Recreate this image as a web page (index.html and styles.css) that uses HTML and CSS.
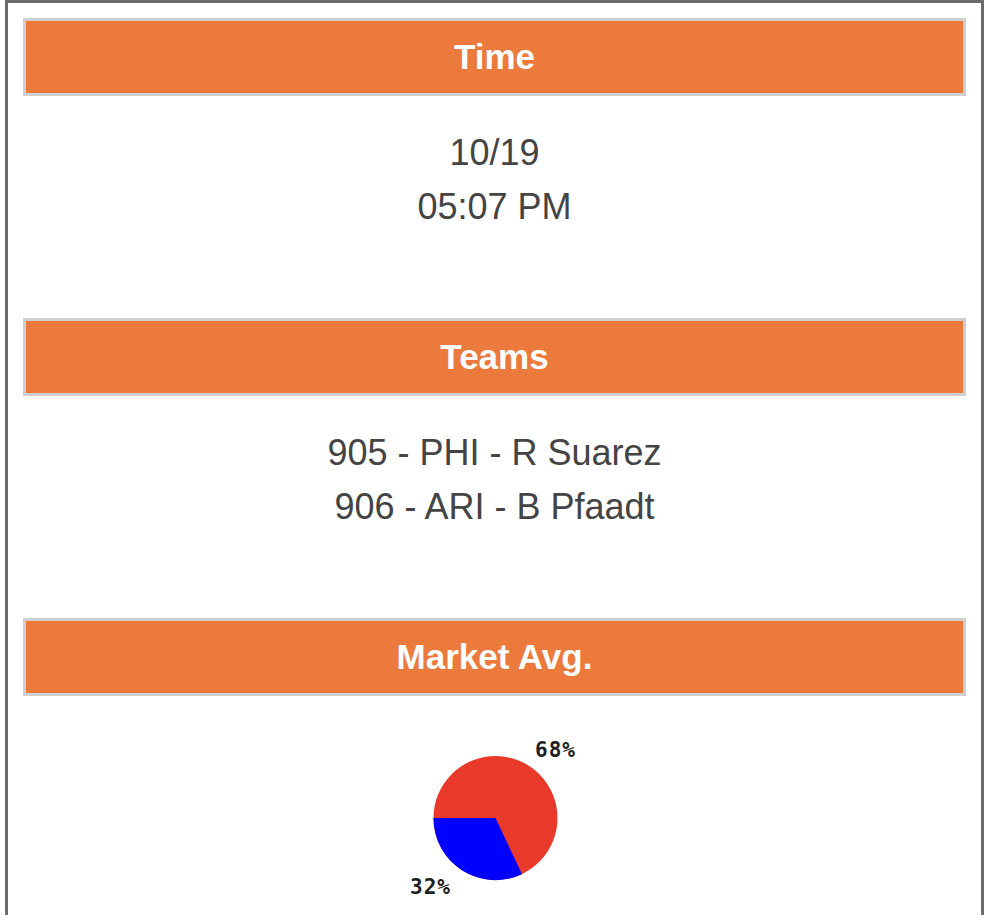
FILE: index.html
```html
<!DOCTYPE html>
<html>
<head>
<meta charset="utf-8">
<link rel="stylesheet" href="styles.css">
</head>
<body>
<div class="panel">
  <section class="block">
    <h2 class="block-head">Time</h2>
    <div class="block-body">
      <div class="line">10/19</div>
      <div class="line">05:07 PM</div>
    </div>
  </section>
  <section class="block">
    <h2 class="block-head">Teams</h2>
    <div class="block-body">
      <div class="line">905 - PHI - R Suarez</div>
      <div class="line">906 - ARI - B Pfaadt</div>
    </div>
  </section>
  <section class="block">
    <h2 class="block-head">Market Avg.</h2>
    <div class="chart-wrap">
      <svg class="pie" width="200" height="189" viewBox="0 0 200 189">
        <circle cx="100.5" cy="92" r="62" fill="#e9392a"/>
        <path d="M100.5,92 L38.5,92 A62,62 0 0,0 127,148.2 Z" fill="#0000ff"/>
        <text class="pie-label" x="140" y="31">68%</text>
        <text class="pie-label" x="15" y="168">32%</text>
      </svg>
    </div>
  </section>
</div>
</body>
</html>
```

FILE: styles.css
```css
html, body {
  margin: 0;
  padding: 0;
  background: #ffffff;
}

body {
  font-family: "Liberation Sans", Arial, Helvetica, sans-serif;
}

.panel {
  margin-left: 5px;
  width: 979px;
  border: 3px solid #6b6b6b;
  border-bottom: none;
  padding: 15px 15px 0 15px;
  min-height: 915px;
  box-sizing: border-box;
}

.block-head {
  margin: 0;
  height: 72px;
  line-height: 72px;
  background: #ec7a3c;
  border: 3px solid #cfcfcf;
  color: #ffffff;
  font-size: 35px;
  font-weight: bold;
  text-align: center;
}

.block-body {
  padding: 30px 0 84px 0;
  text-align: center;
}

.line {
  font-size: 36px;
  line-height: 54px;
  color: #444444;
}

.chart-wrap {
  padding-top: 30px;
  display: flex;
  justify-content: center;
}

.pie {
  display: block;
}

.pie-label {
  font-family: "DejaVu Sans Mono", "Liberation Mono", monospace;
  font-size: 21px;
  font-weight: bold;
  fill: #1e1e1e;
  letter-spacing: 1px;
}
```
